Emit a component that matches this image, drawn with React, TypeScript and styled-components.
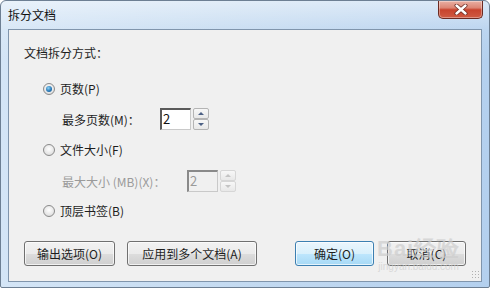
import React from "react";
import styled, { createGlobalStyle } from "styled-components";

const GlobalStyle = createGlobalStyle`
  html, body {
    margin: 0;
    padding: 0;
    background: #ffffff;
  }
  body {
    font-family: "Noto Sans CJK SC", "Noto Sans", "Liberation Sans", sans-serif;
    font-size: 12px;
    color: #1e1e1e;
  }
`;

const Window = styled.div`
  position: relative;
  width: 490px;
  height: 288px;
  box-sizing: border-box;
  border: 1px solid #6d7f93;
  border-radius: 6px 6px 2px 2px;
  background: linear-gradient(
      180deg,
      rgba(255, 255, 255, 0.5) 0px,
      rgba(255, 255, 255, 0.1) 30px,
      rgba(255, 255, 255, 0) 60px
    ),
    linear-gradient(90deg, #d4e5f6 0%, #c5dbf1 45%, #b4d0ee 100%);
  display: flex;
  flex-direction: column;
  overflow: hidden;
`;

const TitleBar = styled.div`
  height: 28px;
  display: flex;
  justify-content: space-between;
  align-items: flex-start;
  padding-left: 7px;
`;

const Title = styled.span`
  margin-top: 6px;
  line-height: 16px;
  font-size: 12px;
  color: #111;
`;

const CloseButton = styled.div`
  width: 45px;
  height: 18px;
  margin-right: 6px;
  box-sizing: border-box;
  border: 1px solid #6b2a22;
  border-top: none;
  border-radius: 0 0 5px 5px;
  background: linear-gradient(180deg, #e9b0a3 0%, #dc8574 40%, #c8432d 52%, #cf5b43 100%);
  box-shadow: inset 0 0 0 1px rgba(255, 255, 255, 0.35);
  display: flex;
  align-items: center;
  justify-content: center;
`;

const Panel = styled.div`
  margin: 0 7px 0 7px;
  height: 253px;
  box-sizing: border-box;
  border: 1px solid #8095ac;
  background: #f0f0f0;
  padding: 15px 0 0 15px;
  display: flex;
  flex-direction: column;
`;

const Heading = styled.div`
  line-height: 16px;
  height: 16px;
`;

const RadioRow = styled.label<{ $gap: number }>`
  margin-top: ${(p) => p.$gap}px;
  margin-left: 19px;
  height: 16px;
  display: flex;
  align-items: center;
  gap: 5px;
  line-height: 16px;
`;

const RadioDot = styled.span<{ $checked?: boolean }>`
  width: 12px;
  height: 12px;
  border-radius: 50%;
  box-sizing: border-box;
  border: 1px solid #8a8a8a;
  background: radial-gradient(circle at 50% 40%, #ffffff 0%, #e6e6e6 60%, #d2d2d2 100%);
  display: flex;
  align-items: center;
  justify-content: center;

  &::after {
    content: "";
    display: ${(p) => (p.$checked ? "block" : "none")};
    width: 6px;
    height: 6px;
    border-radius: 50%;
    background: radial-gradient(circle at 40% 35%, #8fd3f5 0%, #2a7ab8 55%, #0e4f86 100%);
  }
`;

const FieldRow = styled.div<{ $gap: number; $disabled?: boolean }>`
  margin-top: ${(p) => p.$gap}px;
  margin-left: 38px;
  height: 22px;
  display: flex;
  align-items: center;
  color: ${(p) => (p.$disabled ? "#9a9a9a" : "inherit")};
`;

const FieldLabel = styled.span<{ $width: number }>`
  width: ${(p) => p.$width}px;
`;

const NumberBox = styled.div<{ $disabled?: boolean }>`
  width: 31px;
  height: 22px;
  box-sizing: border-box;
  border: 1px solid #c9c9c9;
  border-top: 2px solid ${(p) => (p.$disabled ? "#8a8a8a" : "#5a5a5a")};
  border-left: 2px solid ${(p) => (p.$disabled ? "#8a8a8a" : "#5a5a5a")};
  background: ${(p) => (p.$disabled ? "#f0f0f0" : "#ffffff")};
  color: ${(p) => (p.$disabled ? "#9a9a9a" : "#111")};
  font-size: 13px;
  line-height: 18px;
  padding-left: 1px;
`;

const Spinner = styled.div`
  margin-left: 2px;
  width: 16px;
  height: 22px;
  display: flex;
  flex-direction: column;
`;

const SpinHalf = styled.div<{ $disabled?: boolean }>`
  flex: 1;
  box-sizing: border-box;
  border: 1px solid ${(p) => (p.$disabled ? "#d6d6d6" : "#b4b4b4")};
  border-radius: 2px;
  background: linear-gradient(180deg, #f7f7f7 0%, #e8e8e8 100%);
  display: flex;
  align-items: center;
  justify-content: center;
`;

const Arrow = styled.span<{ $up?: boolean; $disabled?: boolean }>`
  width: 0;
  height: 0;
  border-left: 3px solid transparent;
  border-right: 3px solid transparent;
  ${(p) =>
    p.$up
      ? `border-bottom: 3px solid ${p.$disabled ? "#c4c4c4" : "#4d6185"};`
      : `border-top: 3px solid ${p.$disabled ? "#c4c4c4" : "#4d6185"};`}
`;

const ButtonRow = styled.div`
  margin-top: 22px;
  display: flex;
  align-items: center;
`;

const Button = styled.div<{ $width: number; $primary?: boolean; $gapLeft?: number }>`
  width: ${(p) => p.$width}px;
  height: 25px;
  margin-left: ${(p) => p.$gapLeft ?? 0}px;
  box-sizing: border-box;
  border: 1px solid ${(p) => (p.$primary ? "#3c7fb1" : "#707070")};
  border-radius: 3px;
  background: ${(p) =>
    p.$primary
      ? "linear-gradient(180deg, #eaf6fd 0%, #d9f0fc 50%, #bee6fd 51%, #a7d9f5 100%)"
      : "linear-gradient(180deg, #f2f2f2 0%, #ebebeb 50%, #dddddd 51%, #cfcfcf 100%)"};
  box-shadow: inset 0 0 0 1px rgba(255, 255, 255, 0.7);
  display: flex;
  align-items: center;
  justify-content: center;
  line-height: 16px;
`;

const Watermark = styled.div`
  position: absolute;
  left: 376px;
  top: 236px;
  display: flex;
  flex-direction: column;
  align-items: center;
  color: rgba(205, 205, 205, 0.7);
  pointer-events: none;
`;

const WatermarkBig = styled.span`
  font-family: "Liberation Sans", sans-serif;
  font-size: 22px;
  font-weight: bold;
  line-height: 24px;
  letter-spacing: 1px;
`;

const WatermarkSmall = styled.span`
  font-family: "Liberation Sans", sans-serif;
  font-size: 10px;
  line-height: 11px;
`;

const Grip = styled.div`
  position: absolute;
  right: 10px;
  bottom: 9px;
  width: 8px;
  height: 8px;
  background-image: radial-gradient(circle, #b0b0b0 0.8px, transparent 1px);
  background-size: 3px 3px;
`;

const Spin: React.FC<{ value: string; disabled?: boolean }> = ({ value, disabled }) => (
  <>
    <NumberBox $disabled={disabled}>{value}</NumberBox>
    <Spinner>
      <SpinHalf $disabled={disabled}>
        <Arrow $up $disabled={disabled} />
      </SpinHalf>
      <SpinHalf $disabled={disabled}>
        <Arrow $disabled={disabled} />
      </SpinHalf>
    </Spinner>
  </>
);

const App: React.FC = () => {
  return (
    <>
      <GlobalStyle />
      <Window>
        <TitleBar>
          <Title>拆分文档</Title>
          <CloseButton>
            <svg width="14" height="11" viewBox="0 0 14 11">
              <path
                d="M2.5 1.5 L11.5 9.5 M11.5 1.5 L2.5 9.5"
                stroke="#6b2a22"
                strokeWidth="4"
                strokeLinecap="round"
              />
              <path
                d="M2.5 1.5 L11.5 9.5 M11.5 1.5 L2.5 9.5"
                stroke="#ffffff"
                strokeWidth="2.4"
                strokeLinecap="round"
              />
            </svg>
          </CloseButton>
        </TitleBar>
        <Panel>
          <Heading>文档拆分方式：</Heading>

          <RadioRow $gap={20}>
            <RadioDot $checked />
            页数(P)
          </RadioRow>
          <FieldRow $gap={11}>
            <FieldLabel $width={98}>最多页数(M)：</FieldLabel>
            <Spin value="2" />
          </FieldRow>

          <RadioRow $gap={12}>
            <RadioDot />
            文件大小(F)
          </RadioRow>
          <FieldRow $gap={12} $disabled>
            <FieldLabel $width={125}>最大大小 (MB)(X)：</FieldLabel>
            <Spin value="2" disabled />
          </FieldRow>

          <RadioRow $gap={11}>
            <RadioDot />
            顶层书签(B)
          </RadioRow>

          <ButtonRow>
            <Button $width={91}>输出选项(O)</Button>
            <Button $width={130} $gapLeft={12}>
              应用到多个文档(A)
            </Button>
            <Button $width={79} $gapLeft={38} $primary>
              确定(O)
            </Button>
            <Button $width={79} $gapLeft={13}>
              取消(C)
            </Button>
          </ButtonRow>
        </Panel>
        <Watermark>
          <WatermarkBig>Bai经验</WatermarkBig>
          <WatermarkSmall>jingyan.baidu.com</WatermarkSmall>
        </Watermark>
        <Grip />
      </Window>
    </>
  );
};

export default App;
